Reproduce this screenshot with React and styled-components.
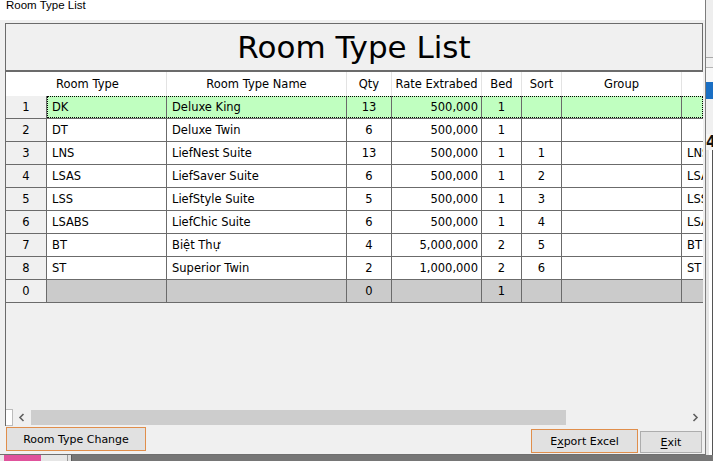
import React from 'react';
import styled, { createGlobalStyle } from 'styled-components';

const GlobalStyle = createGlobalStyle`
  html, body { margin: 0; padding: 0; width: 713px; height: 461px; overflow: hidden; background: #f0f0f0; }
  #root { width: 713px; height: 461px; }
  * { box-sizing: border-box; }
`;

const UI_FONT = `"DejaVu Sans", Verdana, sans-serif`;
const COLS = '41px 120px 180px 45px 90px 40px 40px 120px 1fr';
const LINE = '#6b6b6b';

const Screen = styled.div`
  width: 713px;
  height: 461px;
  display: flex;
  flex-direction: column;
  overflow: hidden;
`;

const TopArea = styled.div`
  display: flex;
  height: 455px;
`;

const Window = styled.div`
  width: 706px;
  display: flex;
  flex-direction: column;
  border-right: 1px solid #7d7d7d;
  border-bottom: 1px solid #6f6f6f;
  background: #f0f0f0;
`;

const TitleBar = styled.div`
  height: 20px;
  background: #ffffff;
  padding-left: 6px;
  overflow: hidden;
`;

const TitleText = styled.div`
  font-family: "Liberation Sans", Arial, sans-serif;
  font-size: 11.5px;
  line-height: 12px;
  margin-top: -1px;
  color: #000;
`;

const Body = styled.div`
  flex: 1;
  display: flex;
  flex-direction: column;
  padding: 3px 2px 0 5px;
  font-family: ${UI_FONT};
  color: #000;
`;

const HeaderPanel = styled.div`
  height: 48px;
  border: 1px solid ${LINE};
  display: flex;
  align-items: center;
  justify-content: center;
  font-size: 31px;
  background: #f0f0f0;
`;

const Grid = styled.div`
  height: 355px;
  display: flex;
  flex-direction: column;
  border-left: 1px solid ${LINE};
  border-top: 1px solid ${LINE};
  background: #f0f0f0;
  overflow: hidden;
  font-size: 11.5px;
`;

const GridHeader = styled.div`
  display: grid;
  grid-template-columns: ${COLS};
  height: 24px;
  background: #ffffff;
`;

const HeadCell = styled.div`
  display: flex;
  align-items: center;
  justify-content: center;
  white-space: nowrap;
  overflow: hidden;
  border-right: ${(p) => (p.$blank ? 'none' : '1px solid #e3e3e3')};
  padding-right: ${(p) => p.$shift || 0}px;
`;

const DataRow = styled.div`
  display: grid;
  grid-template-columns: ${COLS};
  height: 23px;
  position: relative;
  &::after {
    content: '';
    display: ${(p) => (p.$selected ? 'block' : 'none')};
    position: absolute;
    left: 41px;
    top: 0;
    right: 0;
    bottom: 1px;
    border: 1px dotted #000;
    pointer-events: none;
  }
`;

const RowHead = styled.div`
  background: #f0f0f0;
  border-right: 1px solid ${LINE};
  border-bottom: 1px solid ${LINE};
  display: flex;
  align-items: center;
  justify-content: center;
`;

const toneBg = { sel: '#c0ffc0', new: '#cbcbcb' };

const Cell = styled.div`
  background: ${(p) => toneBg[p.$tone] || '#ffffff'};
  border-right: ${(p) => (p.$last ? 'none' : `1px solid ${LINE}`)};
  border-bottom: 1px solid ${LINE};
  display: flex;
  align-items: center;
  justify-content: ${(p) => (p.$align === 'right' ? 'flex-end' : p.$align === 'center' ? 'center' : 'flex-start')};
  padding: 0 ${(p) => (p.$align === 'right' ? 3 : 0)}px 0 ${(p) => (p.$align === 'left' ? 5 : 0)}px;
  white-space: nowrap;
  overflow: hidden;
`;

const Filler = styled.div`
  flex: 1;
`;

const ScrollBar = styled.div`
  height: 17px;
  display: flex;
  background: #f0f0f0;
`;

const ScrollCorner = styled.div`
  width: 7px;
  background: #ffffff;
  border: 1px solid #bcbcbc;
  border-left: none;
`;

const ScrollArrow = styled.div`
  width: 17px;
  display: flex;
  align-items: center;
  justify-content: center;
`;

const ScrollTrack = styled.div`
  flex: 1;
  padding: 1px 0 1px 1px;
`;

const Thumb = styled.div`
  width: 535px;
  height: 100%;
  background: #cdcdcd;
`;

const ButtonRow = styled.div`
  height: 28px;
  display: flex;
  align-items: flex-start;
  padding: 0 1px;
`;

const Spacer = styled.div`
  flex: 1;
`;

const Button = styled.button`
  font-family: ${UI_FONT};
  font-size: 11px;
  color: #000;
  background: #e1e1e1;
  border: 1px solid ${(p) => (p.$accent ? '#e08e4b' : '#adadad')};
  margin-top: ${(p) => p.$mt}px;
  margin-left: ${(p) => p.$ml || 0}px;
  width: ${(p) => p.$w}px;
  height: ${(p) => p.$h}px;
  padding: 0;
  display: flex;
  align-items: center;
  justify-content: center;
  u { text-decoration: underline; text-underline-offset: 2px; }
`;

const SideStrip = styled.div`
  flex: 1;
  display: flex;
  flex-direction: column;
  background: #f4f4f4;
  overflow: hidden;
`;

const Seg = styled.div`
  height: ${(p) => p.$h}px;
  background: ${(p) => p.$bg};
  flex-shrink: 0;
`;

const SideDigit = styled.div`
  height: 16px;
  font-family: ${UI_FONT};
  font-weight: bold;
  font-size: 15px;
  line-height: 16px;
  color: #111;
  padding-left: 0px;
  overflow: hidden;
`;

const SideRest = styled.div`
  flex: 1;
  background: #ffffff;
  border-left: 3px solid #e6e6e6;
  border-right: 1px solid #555;
`;

const BottomStrip = styled.div`
  flex: 1;
  display: flex;
`;

const BSeg = styled.div`
  width: ${(p) => (p.$w ? `${p.$w}px` : 'auto')};
  flex: ${(p) => (p.$w ? '0 0 auto' : '1')};
  background: ${(p) => p.$bg};
`;

const Chevron = ({ dir }) => (
  <svg width="8" height="9" viewBox="0 0 8 9">
    <polyline
      points={dir === 'left' ? '5.5,1 2,4.5 5.5,8' : '2.5,1 6,4.5 2.5,8'}
      fill="none"
      stroke="#5f5f5f"
      strokeWidth="1.6"
    />
  </svg>
);

const columns = [
  { key: 'code', label: 'Room Type', align: 'left', shift: 38 },
  { key: 'name', label: 'Room Type Name', align: 'left' },
  { key: 'qty', label: 'Qty', align: 'center' },
  { key: 'rate', label: 'Rate Extrabed', align: 'right' },
  { key: 'bed', label: 'Bed', align: 'center' },
  { key: 'sort', label: 'Sort', align: 'center' },
  { key: 'group', label: 'Group', align: 'left' },
  { key: 'extra', label: '', align: 'left', last: true },
];

const rows = [
  { n: '1', code: 'DK', name: 'Deluxe King', qty: '13', rate: '500,000', bed: '1', sort: '', group: '', extra: '', tone: 'sel' },
  { n: '2', code: 'DT', name: 'Deluxe Twin', qty: '6', rate: '500,000', bed: '1', sort: '', group: '', extra: '' },
  { n: '3', code: 'LNS', name: 'LiefNest Suite', qty: '13', rate: '500,000', bed: '1', sort: '1', group: '', extra: 'LNS' },
  { n: '4', code: 'LSAS', name: 'LiefSaver Suite', qty: '6', rate: '500,000', bed: '1', sort: '2', group: '', extra: 'LSAS' },
  { n: '5', code: 'LSS', name: 'LiefStyle Suite', qty: '5', rate: '500,000', bed: '1', sort: '3', group: '', extra: 'LSS' },
  { n: '6', code: 'LSABS', name: 'LiefChic Suite', qty: '6', rate: '500,000', bed: '1', sort: '4', group: '', extra: 'LSABS' },
  { n: '7', code: 'BT', name: 'Biệt Thự', qty: '4', rate: '5,000,000', bed: '2', sort: '5', group: '', extra: 'BT' },
  { n: '8', code: 'ST', name: 'Superior Twin', qty: '2', rate: '1,000,000', bed: '2', sort: '6', group: '', extra: 'ST' },
  { n: '0', code: '', name: '', qty: '0', rate: '', bed: '1', sort: '', group: '', extra: '', tone: 'new' },
];

export default function App() {
  return (
    <>
      <GlobalStyle />
      <Screen>
        <TopArea>
          <Window>
            <TitleBar>
              <TitleText>Room Type List</TitleText>
            </TitleBar>
            <Body>
              <HeaderPanel>Room Type List</HeaderPanel>
              <Grid>
                <GridHeader>
                  <HeadCell $blank />
                  {columns.map((c) => (
                    <HeadCell key={c.key} $shift={c.shift} $blank={c.last}>
                      {c.label}
                    </HeadCell>
                  ))}
                </GridHeader>
                {rows.map((r) => (
                  <DataRow key={r.n} $selected={r.tone === 'sel'}>
                    <RowHead>{r.n}</RowHead>
                    {columns.map((c) => (
                      <Cell key={c.key} $align={c.align} $tone={r.tone} $last={c.last}>
                        {r[c.key]}
                      </Cell>
                    ))}
                  </DataRow>
                ))}
                <Filler />
                <ScrollBar>
                  <ScrollCorner />
                  <ScrollArrow>
                    <Chevron dir="left" />
                  </ScrollArrow>
                  <ScrollTrack>
                    <Thumb />
                  </ScrollTrack>
                  <ScrollArrow>
                    <Chevron dir="right" />
                  </ScrollArrow>
                </ScrollBar>
              </Grid>
              <ButtonRow>
                <Button $accent $mt={1} $w={140} $h={24}>
                  Room Type Change
                </Button>
                <Spacer />
                <Button $accent $mt={3} $w={107} $h={24}>
                  E<u>x</u>port Excel
                </Button>
                <Button $mt={5} $ml={2} $w={62} $h={22}>
                  <u>E</u>xit
                </Button>
              </ButtonRow>
            </Body>
          </Window>
          <SideStrip>
            <Seg $h={57} $bg="#eeeeee" />
            <Seg $h={1} $bg="#a9a9a9" />
            <Seg $h={9} $bg="#f0f0f0" />
            <Seg $h={1} $bg="#b4b4b4" />
            <Seg $h={14} $bg="#f7f7f7" />
            <Seg $h={17} $bg="#1a6fc4" />
            <Seg $h={35} $bg="#f0f0f0" />
            <SideDigit>4</SideDigit>
            <SideRest />
          </SideStrip>
        </TopArea>
        <BottomStrip>
          <BSeg $w={4} $bg="#eaeaea" />
          <BSeg $w={37} $bg="#e0529c" />
          <BSeg $w={26} $bg="#e6e6e6" />
          <BSeg $w={1} $bg="#9a9a9a" />
          <BSeg $w={3} $bg="#e0e0e0" />
          <BSeg $w={1} $bg="#5a5a5a" />
          <BSeg $bg="#767676" />
        </BottomStrip>
      </Screen>
    </>
  );
}
